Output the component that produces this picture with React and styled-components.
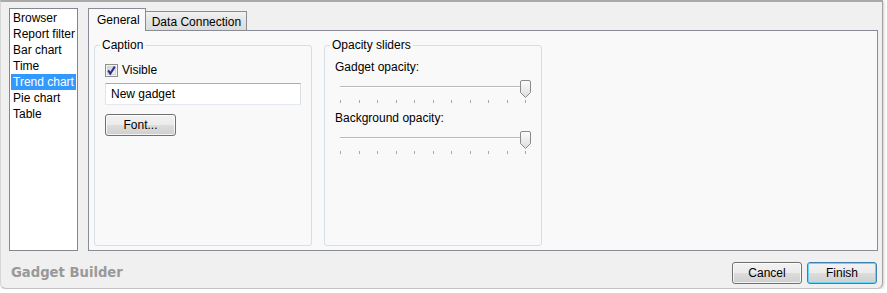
import React from "react";
import styled, { createGlobalStyle } from "styled-components";

const GlobalStyle = createGlobalStyle`
  html, body {
    margin: 0;
    padding: 0;
    background: #ffffff;
  }
  body {
    font-family: "Liberation Sans", Arial, sans-serif;
    font-size: 12px;
    color: #000;
  }
`;

const gadgets = ["Browser", "Report filter", "Bar chart", "Time", "Trend chart", "Pie chart", "Table"];

const Checkbox = ({ checked }) => (
  <svg width="13" height="13" viewBox="0 0 13 13">
    <defs>
      <linearGradient id="cbfill" x1="0" y1="0" x2="1" y2="1">
        <stop offset="0" stopColor="#cbcfd5" />
        <stop offset="1" stopColor="#f7f7f7" />
      </linearGradient>
    </defs>
    <rect x="0.5" y="0.5" width="12" height="12" fill="#f4f4f4" stroke="#8e8f8f" />
    <rect x="2.5" y="2.5" width="8" height="8" fill="url(#cbfill)" stroke="#d2d4d8" />
    {checked && (
      <path d="M3.2 6.4 L5.3 9.6 L9.8 2.6" fill="none" stroke="#2d2f86" strokeWidth="2" />
    )}
  </svg>
);

const Thumb = () => (
  <svg width="11" height="18" viewBox="0 0 11 18">
    <defs>
      <linearGradient id="thfill" x1="0" y1="0" x2="0" y2="1">
        <stop offset="0" stopColor="#fdfdfd" />
        <stop offset="1" stopColor="#dcdcdc" />
      </linearGradient>
    </defs>
    <path
      d="M0.5 2 Q0.5 0.5 2 0.5 H9 Q10.5 0.5 10.5 2 V12.5 L5.5 17.5 L0.5 12.5 Z"
      fill="url(#thfill)"
      stroke="#8b8b8b"
    />
  </svg>
);

const Slider = ({ ticks = 11 }) => (
  <SliderBox>
    <Track />
    <Ticks>
      {Array.from({ length: ticks }).map((_, i) => (
        <Tick key={i} />
      ))}
    </Ticks>
    <ThumbHolder>
      <Thumb />
    </ThumbHolder>
  </SliderBox>
);

const App = () => {
  return (
    <>
      <GlobalStyle />
      <Window>
        <Body>
          <List>
            {gadgets.map((name) => (
              <ListItem key={name} selected={name === "Trend chart"}>
                {name}
              </ListItem>
            ))}
          </List>
          <TabControl>
            <TabStrip>
              <Tab active>General</Tab>
              <Tab>Data Connection</Tab>
            </TabStrip>
            <Panel>
              <Group>
                <Legend>Caption</Legend>
                <CheckRow>
                  <Checkbox checked />
                  <span>Visible</span>
                </CheckRow>
                <TextBox>New gadget</TextBox>
                <Button width="71px" top="9px">
                  Font...
                </Button>
              </Group>
              <Group>
                <Legend>Opacity sliders</Legend>
                <SliderLabel>Gadget opacity:</SliderLabel>
                <Slider />
                <SliderLabel second>Background opacity:</SliderLabel>
                <Slider />
              </Group>
            </Panel>
          </TabControl>
        </Body>
        <Footer>
          <Title>Gadget Builder</Title>
          <Buttons>
            <Button width="70px">Cancel</Button>
            <Button width="70px" isDefault>
              Finish
            </Button>
          </Buttons>
        </Footer>
      </Window>
    </>
  );
};

const Window = styled.div`
  width: 883px;
  height: 289px;
  box-sizing: border-box;
  background: #f0f0f0;
  border-top: 2px solid #a9a9a9;
  border-left: 1px solid #d6d6d6;
  border-right: 1px solid #a3a3a3;
  border-bottom: 1px solid #c2c2c2;
  border-radius: 0 0 6px 6px;
  box-shadow: 1px 1px 3px rgba(0, 0, 0, 0.2);
  display: flex;
  flex-direction: column;
`;

const Body = styled.div`
  display: flex;
  gap: 10px;
  height: 243px;
  padding: 6px 4px 0 8px;
`;

const List = styled.div`
  width: 69px;
  box-sizing: border-box;
  background: #fff;
  border: 1px solid #828790;
  padding: 1px 1px;
`;

const ListItem = styled.div`
  height: 16px;
  line-height: 16px;
  padding-left: 2px;
  white-space: nowrap;
  overflow: hidden;
  background: ${(p) => (p.selected ? "#3399ff" : "transparent")};
  color: ${(p) => (p.selected ? "#fff" : "#000")};
`;

const TabControl = styled.div`
  flex: 1;
  display: flex;
  flex-direction: column;
`;

const TabStrip = styled.div`
  display: flex;
  align-items: flex-end;
  height: 22px;
  position: relative;
  z-index: 1;
`;

const Tab = styled.div`
  box-sizing: border-box;
  border: 1px solid #898c95;
  border-bottom: none;
  white-space: nowrap;
  ${(p) =>
    p.active
      ? `
    height: 23px;
    margin-bottom: -1px;
    padding: 4px 5px 0 8px;
    background: #f9f9f9;
  `
      : `
    height: 19px;
    margin-left: -1px;
    padding: 3px 5px 0 6px;
    background: linear-gradient(#f2f2f2, #e4e4e4 50%, #dcdcdc);
  `}
`;

const Panel = styled.div`
  flex: 1;
  display: flex;
  gap: 12px;
  align-items: flex-start;
  background: #f9f9f9;
  border: 1px solid #898c95;
  padding: 6px 5px 4px 5px;
`;

const Group = styled.fieldset`
  width: 218px;
  height: 209px;
  box-sizing: border-box;
  margin: 0;
  padding: 0 10px;
  border: 1px solid #d5dfe5;
  border-radius: 3px;
  display: flex;
  flex-direction: column;
  align-items: flex-start;
`;

const Legend = styled.legend`
  margin-left: -5px;
  padding: 0 2px;
  line-height: 16px;
`;

const CheckRow = styled.div`
  display: flex;
  align-items: center;
  gap: 4px;
  height: 16px;
  margin-top: 9px;
  svg {
    display: block;
  }
`;

const TextBox = styled.div`
  align-self: stretch;
  box-sizing: border-box;
  height: 22px;
  margin-top: 5px;
  padding: 0 5px;
  line-height: 20px;
  background: #fff;
  border: 1px solid;
  border-color: #abadb3 #dbdfe6 #e3e9ef #e2e3ea;
`;

const Button = styled.div`
  box-sizing: border-box;
  width: ${(p) => p.width};
  height: 22px;
  margin-top: ${(p) => p.top || "0"};
  display: flex;
  align-items: center;
  justify-content: center;
  border: 1px solid ${(p) => (p.isDefault ? "#3c7fb1" : "#707070")};
  border-radius: 3px;
  background: linear-gradient(#f2f2f2 0%, #ebebeb 50%, #dddddd 50%, #cfcfcf 100%);
  box-shadow: inset 0 0 0 1px ${(p) => (p.isDefault ? "#6ad4f6" : "rgba(255,255,255,0.75)")};
`;

const SliderLabel = styled.div`
  line-height: 16px;
  margin-top: ${(p) => (p.second ? "7px" : "6px")};
`;

const SliderBox = styled.div`
  position: relative;
  align-self: stretch;
  height: 26px;
  margin-top: 2px;
`;

const Track = styled.div`
  margin: 9px 0 0 5px;
  height: 1px;
  background: #b9b9b9;
  border-bottom: 1px solid #ffffff;
`;

const Ticks = styled.div`
  display: flex;
  justify-content: space-between;
  margin: 12px 5px 0 5px;
`;

const Tick = styled.div`
  width: 1px;
  height: 3px;
  background: #a8a8a8;
`;

const ThumbHolder = styled.div`
  position: absolute;
  right: 0;
  top: 3px;
  svg {
    display: block;
  }
`;

const Footer = styled.div`
  flex: 1;
  display: flex;
  align-items: center;
  justify-content: space-between;
  padding: 6px 5px 0 10px;
`;

const Title = styled.div`
  font-family: "DejaVu Sans", Verdana, sans-serif;
  font-weight: bold;
  font-size: 13.2px;
  color: #999999;
`;

const Buttons = styled.div`
  display: flex;
  gap: 5px;
`;

export default App;
